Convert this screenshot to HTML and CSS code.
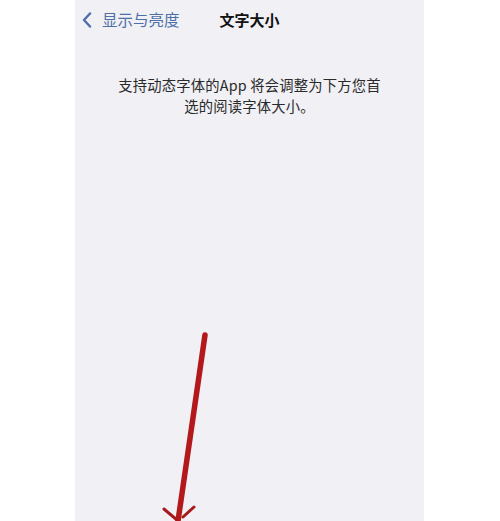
FILE: index.html
```html
<!DOCTYPE html>
<html lang="zh-CN">
<head>
  <meta charset="UTF-8" />
  <title>文字大小</title>
  <meta name="viewport" content="width=device-width, initial-scale=1" />
  <link rel="stylesheet" href="styles.css">
</head>
<body>
  <div class="screen">
    <div class="navbar">
      <a class="back">
        <svg class="chev" width="10" height="16" viewBox="0 0 10 16">
          <path d="M8 1.5 L2 8 L8 14.5" fill="none" stroke="currentColor" stroke-width="2.4" stroke-linecap="round" stroke-linejoin="round"/>
        </svg>
        <span>显示与亮度</span>
      </a>
      <h1>文字大小</h1>
    </div>
    <p class="desc">支持动态字体的App 将会调整为下方您首<br>选的阅读字体大小。</p>

    <!-- 标注箭头 -->
    <svg class="mark" width="60" height="200" viewBox="0 0 60 200">
      <path d="M53 14 L26 200" stroke="#b3181b" stroke-width="5.5" stroke-linecap="round" fill="none"/>
      <path d="M12 188 L25 199 M42 186 L31 196" stroke="#a8191c" stroke-width="3" stroke-linecap="round" fill="none"/>
    </svg>
  </div>
</body>
</html>
```

FILE: styles.css
```css
html, body {
  margin: 0; padding: 0;
  height: 100%;
  overflow: hidden;
}
body {
  background: #fff;
  font-family: "Noto Sans CJK SC", "Noto Sans", sans-serif;
}
.screen {
  position: relative;
  width: 349px;
  height: 100%;
  margin-left: 75px;
  background: #f0f0f5;
}
.navbar {
  display: flex;
  align-items: center;
  height: 38px;
  padding-left: 7px;
}
.back {
  display: flex;
  align-items: center;
  gap: 10px;
  color: #4d6fa8;
  font-size: 15.5px;
}
.chev {
  margin-top: 1px;
}
.navbar h1 {
  margin: 0 0 0 40px;
  font-size: 15px;
  font-weight: 700;
  color: #111;
}
.desc {
  margin: 37px 0 0;
  text-align: center;
  font-size: 14.3px;
  line-height: 20.5px;
  color: #2a2a2a;
  letter-spacing: 0.2px;
}
.mark {
  position: absolute;
  left: 77px;
  top: 321px;
}
```
